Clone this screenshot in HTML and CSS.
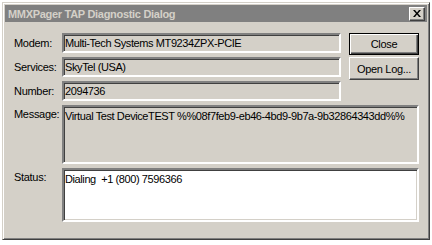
FILE: index.html
```html
<!DOCTYPE html>
<html lang="en">
<head>
  <meta charset="UTF-8" />
  <title>MMXPager TAP Diagnostic Dialog</title>
  <link rel="stylesheet" href="styles.css">
</head>
<body>

  <div class="window">
    <div class="titlebar">
      <span class="title">MMXPager TAP Diagnostic Dialog</span>
      <span class="close-box">
        <svg width="8" height="7" viewBox="0 0 8 7">
          <path d="M0 0h2l2 2.5L6 0h2L5 3.5 8 7H6L4 4.5 2 7H0l3-3.5z" fill="#000"/>
        </svg>
      </span>
    </div>

    <div class="client">
      <div class="label">Modem:</div>
      <div class="field">Multi-Tech Systems MT9234ZPX-PCIE</div>

      <div class="buttons">
        <div class="btn default">Close</div>
        <div class="btn">Open Log...</div>
      </div>

      <div class="label">Services:</div>
      <div class="field">SkyTel (USA)</div>

      <div class="label">Number:</div>
      <div class="field">2094736</div>

      <div class="label top">Message:</div>
      <div class="field wide multi">Virtual Test DeviceTEST %%08f7feb9-eb46-4bd9-9b7a-9b32864343dd%%</div>

      <div class="label top">Status:</div>
      <div class="field wide multi white">Dialing&nbsp; +1 (800) 7596366</div>
    </div>
  </div>

</body>
</html>
```

FILE: styles.css
```css
* {
  box-sizing: border-box;
}

body {
  margin: 0;
  background: #fff;
  font-family: 'Liberation Sans', Arial, sans-serif;
  font-size: 11px;
  color: #000;
}

.window {
  margin: 2px 0 0 2px;
  width: 428px;
  height: 238px;
  background: #d4d0c8;
  border: 1px solid;
  border-color: #d4d0c8 #404040 #404040 #d4d0c8;
  box-shadow: inset 1px 1px #fff, inset -1px -1px #808080;
  padding: 2px;
}

.titlebar {
  height: 17px;
  background: #808080;
  display: flex;
  align-items: center;
  justify-content: space-between;
  padding: 0 2px 0 3px;
}

.title {
  color: #d4d0c8;
  font-weight: bold;
  letter-spacing: -0.3px;
}

.close-box {
  width: 16px;
  height: 14px;
  background: #d4d0c8;
  border: 1px solid;
  border-color: #fff #404040 #404040 #fff;
  box-shadow: inset -1px -1px #808080;
  display: flex;
  align-items: center;
  justify-content: center;
}

.client {
  display: grid;
  grid-template-columns: 40px 279px 70px;
  grid-template-rows: 20px 20px 20px 59px 54px;
  column-gap: 8px;
  row-gap: 4px;
  padding: 11px 0 0 9px;
}

.label {
  display: flex;
  align-items: center;
  white-space: nowrap;
  letter-spacing: -0.3px;
}

.label.top {
  align-items: flex-start;
  padding-top: 3px;
}

.field {
  grid-column: 2;
  border: 2px solid;
  border-color: #808080 #fff #fff #808080;
  box-shadow: inset 1px 1px #404040, inset -1px -1px #d4d0c8;
  display: flex;
  align-items: center;
  padding: 0 1px;
  white-space: nowrap;
  overflow: hidden;
  letter-spacing: -0.4px;
}

.field.wide {
  grid-column: 2 / 4;
}

.field.multi {
  align-items: flex-start;
  padding-top: 3px;
}

.field.white {
  background: #fff;
}

.buttons {
  grid-column: 3;
  grid-row: 1 / 4;
  display: flex;
  flex-direction: column;
  gap: 2px;
}

.btn {
  height: 23px;
  display: flex;
  align-items: center;
  justify-content: center;
  border: 1px solid;
  border-color: #fff #404040 #404040 #fff;
  box-shadow: inset -1px -1px #808080;
  letter-spacing: -0.3px;
}

.btn.default {
  height: 22px;
  border: 1px solid #000;
  box-shadow: inset 1px 1px #fff, inset -1px -1px #404040, inset -2px -2px #808080;
}
```
